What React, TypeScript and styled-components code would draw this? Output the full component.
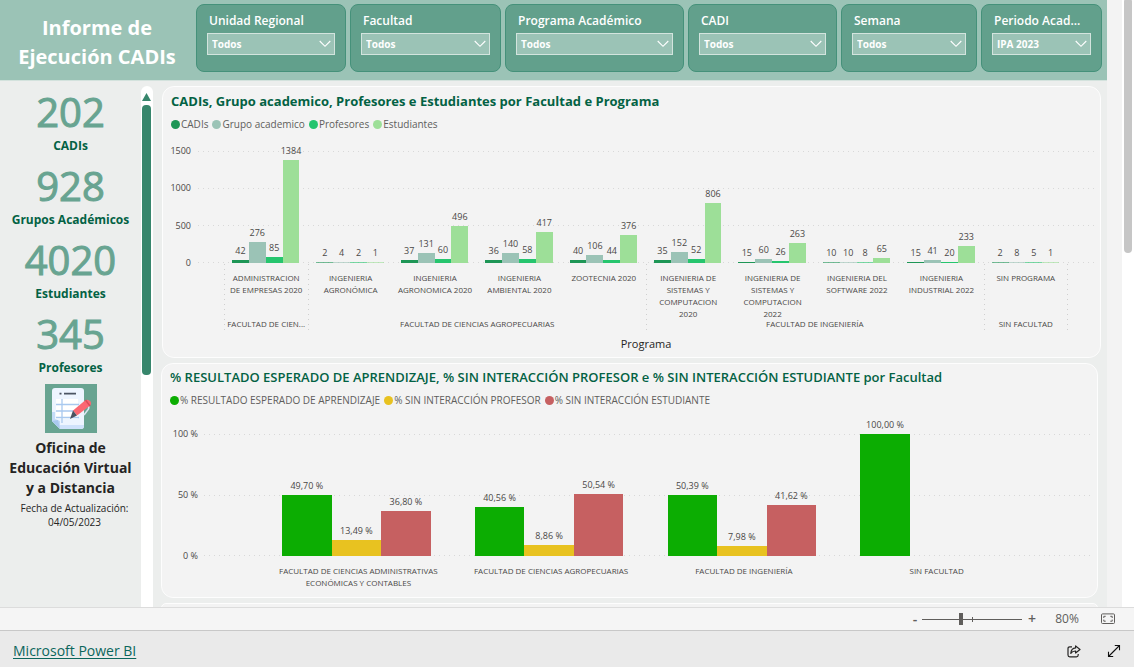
import React from 'react';
import styled, { createGlobalStyle } from 'styled-components';

const GlobalStyle = createGlobalStyle`
  * { box-sizing: border-box; }
  body {
    margin: 0;
    font-family: "Open Sans", "Noto Sans", sans-serif;
    color: #252423;
    background: #ffffff;
  }
  h1, h2, p, dl, dd, dt, ul { margin: 0; padding: 0; }
  button { font: inherit; border: 0; padding: 0; background: none; cursor: pointer; }
`;

const Page = styled.div`
  height: 100vh;
  display: flex;
  flex-direction: column;
  overflow: hidden;
`;

const Viewport = styled.div`
  flex: 1;
  min-height: 0;
  display: flex;
  overflow: hidden;
  background: #f3f3f3;
`;

const Canvas = styled.main`
  flex: 1;
  min-width: 0;
  margin-right: 15px;
  display: flex;
  flex-direction: column;
  background: #eceeed;
`;

const PageScroll = styled.div`
  width: 12px;
  flex: none;
  padding: 0 2px;
  background: #ffffff;
`;

const PageThumb = styled.div`
  height: 42%;
  margin-top: -2px;
  border-radius: 4px;
  background: #c6c6c6;
`;

const Header = styled.header`
  flex: none;
  height: 81px;
  display: flex;
  padding: 4px 5px 0 0;
  background: #9bc3b6;
  border-bottom: 1px solid #d3e2dd;
`;

const ReportTitle = styled.h1`
  width: 196px;
  flex: none;
  padding: 9px 2px 0 0;
  text-align: center;
  font-size: 20px;
  line-height: 29px;
  font-weight: 700;
  color: #ffffff;
`;

const Slicers = styled.div`
  flex: 1;
  min-width: 0;
  height: 68px;
  display: grid;
  grid-template-columns: 150fr 151fr 179fr 149fr 136fr 121fr;
  gap: 4px;
`;

const Slicer = styled.div`
  min-width: 0;
  padding: 6px 10px 0;
  border: 1px solid #45917a;
  border-radius: 8px;
  background: #62a08c;
`;

const SlicerLabel = styled.label`
  display: block;
  padding-left: 2px;
  font-size: 12px;
  line-height: 20px;
  font-weight: 600;
  color: #ffffff;
  white-space: nowrap;
  overflow: hidden;
`;

const SelectBox = styled.div`
  display: grid;
  align-items: center;
  margin-top: 2px;
  & > * { grid-area: 1 / 1; }
  & > svg {
    justify-self: end;
    margin-right: 4px;
    pointer-events: none;
  }
`;

const Select = styled.select`
  width: 100%;
  height: 22px;
  appearance: none;
  padding: 0 20px 0 4px;
  border: 1px solid #d3e4de;
  border-radius: 0;
  background: #9bc3b6;
  font-family: inherit;
  font-size: 10px;
  font-weight: 700;
  color: #ffffff;
`;

const Body = styled.div`
  flex: 1;
  min-height: 0;
  display: flex;
`;

const Sidebar = styled.aside`
  width: 141px;
  flex: none;
  padding-top: 7px;
  text-align: center;
`;

const KpiItem = styled.div`
  height: 74px;
  display: flex;
  flex-direction: column-reverse;
  justify-content: flex-end;
`;

const KpiValue = styled.dd`
  font-size: 40px;
  line-height: 48px;
  color: #68a491;
  -webkit-text-stroke: 1px #68a491;
`;

const KpiLabel = styled.dt`
  font-size: 12px;
  line-height: 20px;
  font-weight: 700;
  color: #036244;
`;

const Office = styled.p`
  margin-top: 4px;
  font-size: 14px;
  line-height: 20px;
  font-weight: 700;
`;

const Updated = styled.p`
  margin-top: 3px;
  padding-left: 8px;
  font-size: 10px;
  line-height: 14px;
`;

const KpiScroll = styled.div`
  width: 12px;
  flex: none;
  margin-top: 5px;
  padding: 7px 2px 0 1px;
  border-radius: 6px 6px 0 0;
  background: #ffffff;
  & > svg { display: block; margin-bottom: 4px; }
`;

const KpiThumb = styled.div`
  height: 270px;
  border-radius: 4px;
  background: #37866c;
`;

const Cards = styled.div`
  flex: 1;
  min-width: 0;
  display: flex;
  flex-direction: column;
  gap: 5px;
  padding-top: 5px;
`;

const Card = styled.section<{ $narrow?: boolean }>`
  flex: none;
  margin: ${(p) => (p.$narrow ? '0 9px 0 8px' : '0 6px 0 9px')};
  padding: ${(p) => (p.$narrow ? '3px 6px 5px 8px' : '4px 6px 5px 8px')};
  border: 1px solid #fdfdfd;
  border-radius: 12px;
  background: #f3f3f3;
`;

const CardTitle = styled.h2<{ $weight: number }>`
  font-size: 13px;
  line-height: 20px;
  font-weight: ${(p) => p.$weight};
  color: #036244;
  white-space: nowrap;
`;

const Legend = styled.ul`
  display: flex;
  gap: 4px;
  margin-top: 5px;
  list-style: none;
  font-size: 10px;
  line-height: 16px;
  color: #605e5c;
  white-space: nowrap;
`;

const LegendItem = styled.li<{ $color: string }>`
  display: flex;
  align-items: center;
  gap: 1px;
  &::before {
    content: '';
    width: 9px;
    height: 9px;
    border-radius: 50%;
    background: ${(p) => p.$color};
  }
`;

const Chart = styled.div<{ $axis: number; $gap: number; $top: number }>`
  display: grid;
  grid-template-columns: ${(p) => p.$axis}px 1fr;
  column-gap: ${(p) => p.$gap}px;
  margin-top: ${(p) => p.$top}px;
  font-size: 9px;
  line-height: 12px;
  color: #4a4846;
`;

const YAxis = styled.div`
  margin: -6px 0;
  display: flex;
  flex-direction: column;
  justify-content: space-between;
  align-items: flex-end;
  white-space: nowrap;
`;

const Plot = styled.div<{ $height: number }>`
  height: ${(p) => p.$height}px;
  display: grid;
  & > * { grid-area: 1 / 1; min-height: 0; }
`;

const GridLines = styled.div`
  display: flex;
  flex-direction: column;
  justify-content: space-between;
  & > i {
    height: 1px;
    background: repeating-linear-gradient(90deg, #d8d8d8 0 1px, transparent 1px 5px);
  }
`;

const Bars = styled.div<{ $pad: number }>`
  display: flex;
  padding: 0 ${(p) => p.$pad}px;
`;

const BarGroup = styled.div<{ $pad: string }>`
  flex: 1;
  min-width: 0;
  display: flex;
  padding: ${(p) => p.$pad};
`;

const BarSlot = styled.div`
  flex: 1;
  min-width: 0;
  display: flex;
  flex-direction: column;
  justify-content: flex-end;
  align-items: center;
  white-space: nowrap;
  & > span { flex: none; margin-bottom: 3px; }
`;

const Bar = styled.div<{ $color: string; $faint?: boolean }>`
  flex: none;
  width: 100%;
  min-height: 1px;
  background: ${(p) => p.$color};
  opacity: ${(p) => (p.$faint ? 0.6 : 1)};
`;

const XAxis = styled.div<{ $pad: number }>`
  grid-column: 2;
  display: flex;
  padding: 0 ${(p) => p.$pad}px;
  text-align: center;
  font-size: 8px;
`;

const dots = 'repeating-linear-gradient(180deg, #cfcfcf 0 1px, transparent 1px 5px)';

const Faculty = styled.div<{ $span: number }>`
  flex: ${(p) => p.$span} 1 0;
  min-width: 0;
  background: ${dots} left / 1px 100% no-repeat;
  margin-top: 1px;
  &:last-child {
    background: ${dots} left / 1px 100% no-repeat, ${dots} right / 1px 100% no-repeat;
  }
`;

const Programs = styled.div`
  display: flex;
  height: 54px;
  padding-top: 8px;
  & > span { flex: 1; min-width: 0; white-space: pre-line; }
`;

const FacultyName = styled.div`
  height: 14px;
  white-space: nowrap;
`;

const FacultyLabel = styled.span`
  flex: 1;
  min-width: 0;
  height: 27px;
  margin-top: 9px;
  white-space: pre-line;
`;

const AxisTitle = styled.div`
  grid-column: 2;
  margin-top: 4px;
  text-align: center;
  font-size: 11px;
  line-height: 16px;
  color: #252423;
`;

const ZoomBar = styled.div`
  flex: none;
  height: 23px;
  display: flex;
  align-items: center;
  justify-content: flex-end;
  padding-right: 19px;
  border-top: 1px solid #dcdcdc;
  background: #f5f5f5;
  font-size: 12px;
  line-height: 16px;
  color: #605e5c;
`;

const ZoomButton = styled.button`
  width: 14px;
  height: 20px;
  font-size: 14px;
  line-height: 20px;
  font-weight: 600;
  color: #605e5c;
`;

const ZoomSlider = styled.input`
  width: 100px;
  height: 12px;
  margin: 0 3px 0 0;
  appearance: none;
  background:
    linear-gradient(#605e5c, #605e5c) 50% 50% / 1px 5px no-repeat,
    linear-gradient(#605e5c, #605e5c) 0 50% / 100% 1px no-repeat;
  &::-webkit-slider-thumb {
    appearance: none;
    width: 4px;
    height: 12px;
    background: #605e5c;
  }
`;

const ZoomValue = styled.span`
  width: 34px;
  text-align: center;
  margin: 0 17px 0 11px;
`;

const IconButton = styled.button`
  display: flex;
  color: inherit;
`;

const Footer = styled.footer`
  flex: none;
  height: 37px;
  display: flex;
  align-items: center;
  gap: 26px;
  padding: 4px 13px 0;
  border-top: 1px solid #c8c8c8;
  background: #eaeaea;
  color: #252423;
`;

const BrandLink = styled.a`
  margin-right: auto;
  font-size: 14px;
  line-height: 20px;
  color: #0b665c;
  text-underline-offset: 2px;
`;

const slicers = [
  { id: 'unidad', label: 'Unidad Regional', value: 'Todos' },
  { id: 'facultad', label: 'Facultad', value: 'Todos' },
  { id: 'programa', label: 'Programa Académico', value: 'Todos' },
  { id: 'cadi', label: 'CADI', value: 'Todos' },
  { id: 'semana', label: 'Semana', value: 'Todos' },
  { id: 'periodo', label: 'Periodo Acad...', value: 'IPA 2023' },
];

const kpis = [
  { value: '202', label: 'CADIs' },
  { value: '928', label: 'Grupos Académicos' },
  { value: '4020', label: 'Estudiantes' },
  { value: '345', label: 'Profesores' },
];

const programSeries = [
  { name: 'CADIs', color: '#1e9656' },
  { name: 'Grupo academico', color: '#9bc3b6' },
  { name: 'Profesores', color: '#26c56e' },
  { name: 'Estudiantes', color: '#9ddf98' },
];

const faculties = [
  {
    name: 'FACULTAD DE CIEN...',
    programs: [{ name: 'ADMINISTRACION\nDE EMPRESAS 2020', values: [42, 276, 85, 1384] }],
  },
  {
    name: 'FACULTAD DE CIENCIAS AGROPECUARIAS',
    programs: [
      { name: 'INGENIERIA\nAGRONÓMICA', values: [2, 4, 2, 1] },
      { name: 'INGENIERIA\nAGRONOMICA 2020', values: [37, 131, 60, 496] },
      { name: 'INGENIERIA\nAMBIENTAL 2020', values: [36, 140, 58, 417] },
      { name: 'ZOOTECNIA 2020', values: [40, 106, 44, 376] },
    ],
  },
  {
    name: 'FACULTAD DE INGENIERÍA',
    programs: [
      { name: 'INGENIERIA DE\nSISTEMAS Y\nCOMPUTACION\n2020', values: [35, 152, 52, 806] },
      { name: 'INGENIERIA DE\nSISTEMAS Y\nCOMPUTACION\n2022', values: [15, 60, 26, 263] },
      { name: 'INGENIERIA DEL\nSOFTWARE 2022', values: [10, 10, 8, 65] },
      { name: 'INGENIERIA\nINDUSTRIAL 2022', values: [15, 41, 20, 233] },
    ],
  },
  {
    name: 'SIN FACULTAD',
    programs: [{ name: 'SIN PROGRAMA', values: [2, 8, 5, 1] }],
  },
];

const rateSeries = [
  { name: '% RESULTADO ESPERADO DE APRENDIZAJE', color: '#0cad02' },
  { name: '% SIN INTERACCIÓN PROFESOR', color: '#e8c220' },
  { name: '% SIN INTERACCIÓN ESTUDIANTE', color: '#c66061' },
];

const rates: { name: string; values: (number | null)[] }[] = [
  { name: 'FACULTAD DE CIENCIAS ADMINISTRATIVAS\nECONÓMICAS Y CONTABLES', values: [49.7, 13.49, 36.8] },
  { name: 'FACULTAD DE CIENCIAS AGROPECUARIAS', values: [40.56, 8.86, 50.54] },
  { name: 'FACULTAD DE INGENIERÍA', values: [50.39, 7.98, 41.62] },
  { name: 'SIN FACULTAD', values: [100, null, null] },
];

const percent = (v: number) => `${v.toFixed(2).replace('.', ',')} %`;

const Chevron = () => (
  <svg width="12" height="8" viewBox="0 0 12 8" fill="none" stroke="#fff" strokeWidth="1.1" aria-hidden="true">
    <path d="M0.7 1 L6 6.3 L11.3 1" />
  </svg>
);

const Drawing = styled.svg`
  display: block;
  margin: 0 auto;
`;

const DocumentIcon = () => (
  <Drawing width="52" height="50" viewBox="0 0 52 50" aria-hidden="true">
    <rect width="52" height="49" fill="#68a491" />
    <path d="M10 4 H36 Q39 4 39 7 V42 Q39 45 36 45 H15 L7 37 V7 Q7 4 10 4 Z" fill="#edf5ff" />
    <path d="M7 28 H10 V35 L15 37 V45 L7 37 Z" fill="#c4dcf8" />
    <path d="M7 37 L13 36 L15 45 Z" fill="#a9c9ef" />
    <path d="M15 41 H39 V42 Q39 45 36 45 H15 Z" fill="#cfe2fb" />
    <rect x="11" y="15" width="22" height="20" fill="#ffffff" />
    <path d="M11 20.5 H34 M11 27 H34 M11 33.5 H34 M17 15 V39" stroke="#a9c9ef" strokeWidth="1.3" fill="none" />
    <path d="M14.5 9.7 H16.5 M19 9.7 H31" stroke="#4b5563" strokeWidth="1.8" />
    <path d="M43 21 Q45 24 42 27 L39 31" stroke="#d9e6f2" strokeWidth="1.6" fill="none" />
    <path d="M40 16.5 Q43 14.5 45.5 17.5 Q47 20 44.5 22 L32 31.5 L28 26.5 Z" fill="#fb6772" />
    <path d="M40.5 16 L45 22" stroke="#d94b5a" strokeWidth="1.4" />
    <path d="M28 26.5 L32 31.5 L25 35 Z" fill="#4b5260" />
  </Drawing>
);

const FitIcon = () => (
  <svg width="14" height="12" viewBox="0 0 14 12" fill="none" stroke="#605e5c" aria-hidden="true">
    <rect x="0.5" y="0.9" width="13" height="9.6" rx="1" />
    <path d="M4.7 3.3 H2.8 V5 M2.8 6.6 V8.2 H4.7 M9.3 3.3 H11.2 V5 M11.2 6.6 V8.2 H9.3" />
  </svg>
);

const ShareIcon = () => (
  <svg width="14" height="13" viewBox="0 0 14 13" fill="none" stroke="#252423" strokeWidth="1.2" aria-hidden="true">
    <path d="M5 1.8 H2.8 Q1 1.8 1 3.6 V10 Q1 11.8 2.8 11.8 H9.4 Q11.2 11.8 11.2 10 V9" />
    <path d="M8.6 0.9 L13 4.5 L8.6 8 V6 Q5.6 5.8 3.8 8.4 Q4.2 3.2 8.6 2.9 Z" strokeLinejoin="round" />
  </svg>
);

const ExpandIcon = () => (
  <svg width="14" height="14" viewBox="0 0 14 14" fill="none" stroke="#111" strokeWidth="1.1" aria-hidden="true">
    <path d="M1.5 12.5 L12.5 1.5 M7.8 1.5 H12.5 V6.2 M1.5 7.8 V12.5 H6.2" />
  </svg>
);

function ProgramChart() {
  return (
    <Card>
      <CardTitle $weight={700}>CADIs, Grupo academico, Profesores e Estudiantes por Facultad e Programa</CardTitle>
      <Legend>
        {programSeries.map((s) => (
          <LegendItem key={s.name} $color={s.color}>{s.name}</LegendItem>
        ))}
      </Legend>
      <Chart $axis={20} $gap={7} $top={19}>
        <YAxis>
          {[1500, 1000, 500, 0].map((v) => <span key={v}>{v}</span>)}
        </YAxis>
        <Plot $height={112}>
          <GridLines><i /><i /><i /><i /></GridLines>
          <Bars $pad={26}>
            {faculties.flatMap((f) => f.programs).map((p) => (
              <BarGroup key={p.name} $pad="0 9px 0 8px">
                {p.values.map((v, i) => (
                  <BarSlot key={i}>
                    <span>{v}</span>
                    <Bar
                      $color={programSeries[i].color}
                      $faint={v < 12}
                      style={{ height: `${(v / 1500) * 100}%` }}
                    />
                  </BarSlot>
                ))}
              </BarGroup>
            ))}
          </Bars>
        </Plot>
        <XAxis $pad={26}>
          {faculties.map((f) => (
            <Faculty key={f.name} $span={f.programs.length}>
              <Programs>
                {f.programs.map((p) => <span key={p.name}>{p.name}</span>)}
              </Programs>
              <FacultyName>{f.name}</FacultyName>
            </Faculty>
          ))}
        </XAxis>
        <AxisTitle>Programa</AxisTitle>
      </Chart>
    </Card>
  );
}

function RateChart() {
  return (
    <Card $narrow>
      <CardTitle $weight={600}>
        % RESULTADO ESPERADO DE APRENDIZAJE, % SIN INTERACCIÓN PROFESOR e % SIN INTERACCIÓN ESTUDIANTE por Facultad
      </CardTitle>
      <Legend>
        {rateSeries.map((s) => (
          <LegendItem key={s.name} $color={s.color}>{s.name}</LegendItem>
        ))}
      </Legend>
      <Chart $axis={28} $gap={6} $top={26}>
        <YAxis>
          <span>100 %</span>
          <span>50 %</span>
          <span>0 %</span>
        </YAxis>
        <Plot $height={122}>
          <GridLines><i /><i /><i /></GridLines>
          <Bars $pad={58}>
            {rates.map((r) => (
              <BarGroup key={r.name} $pad="0 24px 0 20px">
                {r.values.map((v, i) => (
                  <BarSlot key={i}>
                    {v !== null && (
                      <>
                        <span>{percent(v)}</span>
                        <Bar $color={rateSeries[i].color} style={{ height: `${v}%` }} />
                      </>
                    )}
                  </BarSlot>
                ))}
              </BarGroup>
            ))}
          </Bars>
        </Plot>
        <XAxis $pad={58}>
          {rates.map((r) => <FacultyLabel key={r.name}>{r.name}</FacultyLabel>)}
        </XAxis>
      </Chart>
    </Card>
  );
}

export default function App() {
  return (
    <>
      <GlobalStyle />
      <Page>
        <Viewport>
          <Canvas>
            <Header>
              <ReportTitle>Informe de<br />Ejecución CADIs</ReportTitle>
              <Slicers>
                {slicers.map((s) => (
                  <Slicer key={s.id}>
                    <SlicerLabel htmlFor={s.id}>{s.label}</SlicerLabel>
                    <SelectBox>
                      <Select id={s.id} defaultValue={s.value}>
                        <option>{s.value}</option>
                      </Select>
                      <Chevron />
                    </SelectBox>
                  </Slicer>
                ))}
              </Slicers>
            </Header>
            <Body>
              <Sidebar>
                <dl>
                  {kpis.map((k) => (
                    <KpiItem key={k.label}>
                      <KpiLabel>{k.label}</KpiLabel>
                      <KpiValue>{k.value}</KpiValue>
                    </KpiItem>
                  ))}
                </dl>
                <DocumentIcon />
                <Office>Oficina de<br />Educación Virtual<br />y a Distancia</Office>
                <Updated>Fecha de Actualización:<br />04/05/2023</Updated>
              </Sidebar>
              <KpiScroll>
                <svg width="9" height="8" viewBox="0 0 9 8" aria-hidden="true">
                  <path d="M4.5 0 L9 8 H0 Z" fill="#37866c" />
                </svg>
                <KpiThumb />
              </KpiScroll>
              <Cards>
                <ProgramChart />
                <RateChart />
                <Card $narrow />
              </Cards>
            </Body>
          </Canvas>
          <PageScroll><PageThumb /></PageScroll>
        </Viewport>
        <ZoomBar>
          <ZoomButton aria-label="Alejar">-</ZoomButton>
          <ZoomSlider type="range" min={0} max={100} defaultValue={39} aria-label="Zoom" />
          <ZoomButton aria-label="Acercar">+</ZoomButton>
          <ZoomValue>80%</ZoomValue>
          <IconButton aria-label="Ajustar a la página"><FitIcon /></IconButton>
        </ZoomBar>
        <Footer>
          <BrandLink href="#">Microsoft Power BI</BrandLink>
          <IconButton aria-label="Compartir"><ShareIcon /></IconButton>
          <IconButton aria-label="Pantalla completa"><ExpandIcon /></IconButton>
        </Footer>
      </Page>
    </>
  );
}
